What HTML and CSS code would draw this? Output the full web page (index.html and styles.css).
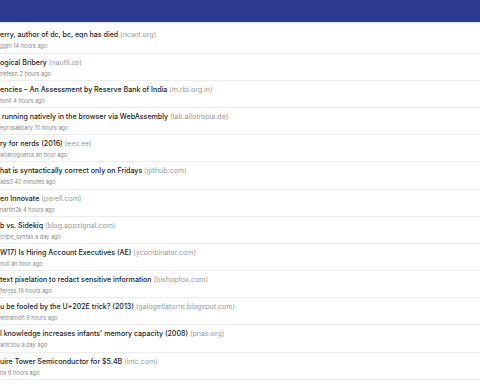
FILE: index.html
```html
<!DOCTYPE html>
<html lang="en">
  <head>
    <meta charset="UTF-8" />
    <meta name="viewport" content="width=device-width, initial-scale=1.0" />
    <title>Top stories</title>

    <link rel="stylesheet" href="styles.css">
  </head>
  <body>
    <header class="top-bar"></header>

    <ul class="story-list">
      <li class="story">
        <p class="story-title">erry, author of dc, bc, eqn has died <span class="story-domain">(ncwit.org)</span></p>
        <p class="story-meta">ggm 14 hours ago</p>
      </li>
      <li class="story">
        <p class="story-title">ogical Bribery <span class="story-domain">(nautil.us)</span></p>
        <p class="story-meta">netesn 2 hours ago</p>
      </li>
      <li class="story">
        <p class="story-title">encies – An Assessment by Reserve Bank of India <span class="story-domain">(m.rbi.org.in)</span></p>
        <p class="story-meta">tonit 4 hours ago</p>
      </li>
      <li class="story">
        <p class="story-title">&nbsp;running natively in the browser via WebAssembly <span class="story-domain">(lab.allotropia.de)</span></p>
        <p class="story-meta">eyrusakbary 10 hours ago</p>
      </li>
      <li class="story">
        <p class="story-title">ry for nerds (2016) <span class="story-domain">(eev.ee)</span></p>
        <p class="story-meta">arianoguerra an hour ago</p>
      </li>
      <li class="story">
        <p class="story-title">hat is syntactically correct only on Fridays <span class="story-domain">(github.com)</span></p>
        <p class="story-meta">abs3 40 minutes ago</p>
      </li>
      <li class="story">
        <p class="story-title">en Innovate <span class="story-domain">(perell.com)</span></p>
        <p class="story-meta">nartin2k 4 hours ago</p>
      </li>
      <li class="story">
        <p class="story-title">b vs. Sidekiq <span class="story-domain">(blog.appsignal.com)</span></p>
        <p class="story-meta">cripe_syntax a day ago</p>
      </li>
      <li class="story">
        <p class="story-title">W17) Is Hiring Account Executives (AE) <span class="story-domain">(ycombinator.com)</span></p>
        <p class="story-meta">null an hour ago</p>
      </li>
      <li class="story">
        <p class="story-title">text pixelation to redact sensitive information <span class="story-domain">(bishopfox.com)</span></p>
        <p class="story-meta">feross 19 hours ago</p>
      </li>
      <li class="story">
        <p class="story-title">u be fooled by the U+202E trick? (2013) <span class="story-domain">(galogetlatorre.blogspot.com)</span></p>
        <p class="story-meta">ehnamoh 9 hours ago</p>
      </li>
      <li class="story">
        <p class="story-title">l knowledge increases infants' memory capacity (2008) <span class="story-domain">(pnas.org)</span></p>
        <p class="story-meta">amrzou a day ago</p>
      </li>
      <li class="story">
        <p class="story-title">uire Tower Semiconductor for $5.4B <span class="story-domain">(intc.com)</span></p>
        <p class="story-meta">nx 6 hours ago</p>
      </li>
    </ul>
  </body>
</html>
```

FILE: styles.css
```css
body {
  margin: 0;
  background-color: white;
  font-family: Inter, "Liberation Sans", sans-serif;
  overflow: hidden;
}

.top-bar {
  height: 22px;
  background-color: #2c3a8e;
  box-shadow: 0 1px 1px rgba(43, 56, 140, 0.15);
}

.story-list {
  list-style-type: none;
  margin: 4px 0 0;
  padding: 0;
}

.story {
  padding: 4px 0 2.2px;
  border-bottom: 1px solid #ececec;
}

.story:first-child {
  padding-top: 4.4px;
}

.story p {
  margin: 0;
  white-space: nowrap;
}

.story-title {
  font-size: 7.07px;
  line-height: 9px;
  font-weight: 500;
  color: #222;
}

.story-domain {
  font-weight: 400;
  color: #999;
}

.story-meta {
  margin-top: 3px !important;
  font-size: 5.6px;
  line-height: 8px;
  color: #888;
}
```
